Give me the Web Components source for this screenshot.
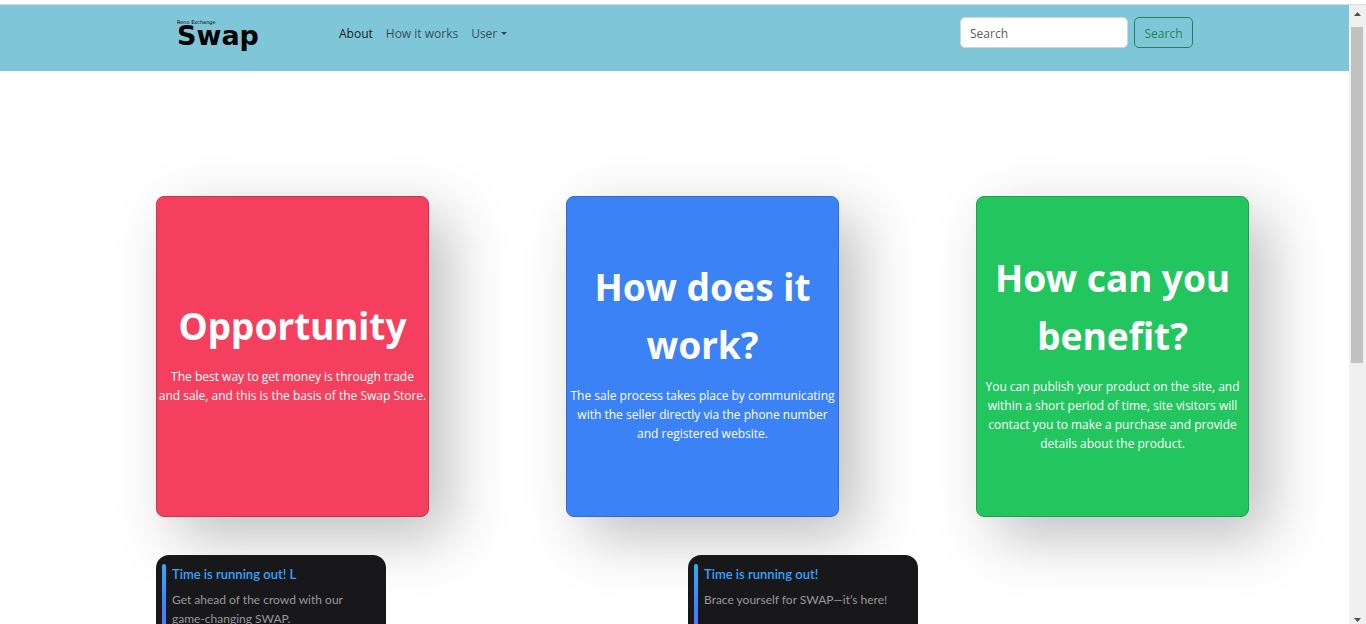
<!DOCTYPE html>
<html lang="en">
<head>
<meta charset="utf-8">
<title>Swap</title>
<style>
html, body { margin: 0; height: 100%; }
body { font-family: "Open Sans", "Noto Sans", sans-serif; font-size: 12px; background: #fff; overflow: hidden; }
</style>
</head>
<body>
<swap-app></swap-app>
<script>
const define = (name, html) => customElements.define(name, class extends HTMLElement {
  constructor() {
    super();
    const t = document.createElement('template');
    t.innerHTML = html;
    this.attachShadow({ mode: 'open' }).append(t.content.cloneNode(true));
  }
});

define('swap-logo', `
<style>
:host { display: block; color: #000; }
a { display: block; color: inherit; text-decoration: none; }
small { display: block; font: 5px/5px "DejaVu Sans", sans-serif; }
strong { display: block; font: bold 27px/22px "DejaVu Sans", sans-serif; }
</style>
<a href="#"><small>Reno Exchange</small><strong>Swap</strong></a>`);

define('nav-link', `
<style>
:host { display: block; color: rgba(0,0,0,.65); }
:host([active]) { color: rgba(0,0,0,.9); }
a { display: flex; align-items: center; gap: 4px; color: inherit; text-decoration: none; line-height: 19px; white-space: nowrap; }
i { display: none; border: 3px solid transparent; border-top-color: currentColor; border-bottom: 0; }
:host([menu]) i { display: block; }
</style>
<a href="#"><slot></slot><i></i></a>`);

define('search-form', `
<style>
:host { display: block; }
form { display: flex; gap: 6px; margin: 0; }
input, button { box-sizing: border-box; height: 31px; margin: 0; font: 12px/19px "Open Sans", sans-serif; border-radius: 5px; }
input { width: 168px; padding: 2px 9px 0; border: 1px solid #ced4da; background: #fff; color: #212529; }
input::placeholder { color: #595c5f; opacity: 1; }
button { width: 59px; padding: 2px 0 0; border: 1px solid #198754; background: none; color: #198754; }
</style>
<form role="search"><input type="search" placeholder="Search" aria-label="Search"><button type="button">Search</button></form>`);

define('nav-bar', `
<style>
:host { display: block; background: #80c6d9; }
nav { box-sizing: border-box; height: 66px; padding: 12px 156px 0 177px; display: flex; align-items: flex-start; }
.links { display: flex; gap: 13px; flex: 1; padding-top: 7px; }
swap-logo { width: 162px; padding-top: 3px; }
</style>
<nav><swap-logo></swap-logo>
<div class="links"><nav-link active>About</nav-link><nav-link>How it works</nav-link><nav-link menu>User</nav-link></div>
<search-form></search-form></nav>`);

define('info-card', `
<style>
:host { box-sizing: border-box; width: 273px; height: 321px; display: flex; flex-direction: column; justify-content: center; text-align: center; color: #fff; background: var(--fill); border: 1px solid var(--edge); border-radius: 8px; box-shadow: 20px 20px 60px #bebebe, -20px -20px 60px #fff; }
h1 { margin: 0 0 12px; font: bold 37px/58px "Noto Sans", sans-serif; }
p { margin: 0 0 12px; line-height: 19px; }
</style>
<h1><slot name="title"></slot></h1><p><slot></slot></p>`);

define('notice-card', `
<style>
:host { box-sizing: border-box; width: 230px; height: 104px; display: flex; gap: 6px; padding: 9px 24px 9px 6px; background: #18181b; border-radius: 13px; font-family: Lato, "Gill Sans", sans-serif; }
i { width: 4px; flex: none; border-radius: 2px; background: linear-gradient(#2eadff, #3d83ff, #7e61ff); }
h2 { margin: 0 0 6px; font-size: 13px; line-height: 20px; font-weight: 600; color: #32a6ff; }
p { margin: 0; line-height: 19px; color: #999; }
</style>
<i></i><div><h2><slot name="title"></slot></h2><p><slot></slot></p></div>`);

define('scroll-rail', `
<style>
:host { display: flex; flex-direction: column; width: 17px; background: #f0f0f0; }
svg { display: block; width: 17px; height: 17px; fill: #505050; }
.track { flex: 1; padding: 5px 3px 0 2px; }
.thumb { height: 58%; background: #c1c1c1; }
</style>
<svg viewBox="0 0 17 17"><path d="M5 11h7L8.5 7z"/></svg>
<div class="track"><div class="thumb"></div></div>
<svg viewBox="0 0 17 17"><path d="M5 11h7L8.5 15z"/></svg>`);

define('swap-app', `
<style>
:host { display: flex; box-sizing: border-box; height: 100vh; padding-top: 4px; }
.view { flex: 1; min-width: 0; overflow: hidden; }
scroll-rail, .view { border-top: 1px solid #dcdcdc; }
.cards { display: flex; justify-content: space-between; padding: 125px 100px 38px 156px; }
.notices { position: relative; display: grid; grid-template-columns: 1fr 1fr; padding: 0 129px 0 156px; }
.red { --fill: #f43f5e; --edge: #c9344e; }
.blue { --fill: #3b82f6; --edge: #316bcb; }
.green { --fill: #22c55e; --edge: #1ca24d; }
</style>
<div class="view">
<nav-bar></nav-bar>
<main>
<div class="cards">
<info-card class="red"><span slot="title">Opportunity</span>The best way to get money is through trade<br>and sale, and this is the basis of the Swap Store.</info-card>
<info-card class="blue"><span slot="title">How does it work?</span>The sale process takes place by communicating with the seller directly via the phone number and registered website.</info-card>
<info-card class="green"><span slot="title">How can you benefit?</span>You can publish your product on the site, and within a short period of time, site visitors will contact you to make a purchase and provide details about the product.</info-card>
</div>
<div class="notices">
<notice-card><span slot="title">Time is running out! L</span>Get ahead of the crowd with our game-changing SWAP.</notice-card>
<notice-card><span slot="title">Time is running out!</span>Brace yourself for SWAP—it’s here!</notice-card>
</div>
</main>
</div>
<scroll-rail></scroll-rail>`);
</script>
</body>
</html>
